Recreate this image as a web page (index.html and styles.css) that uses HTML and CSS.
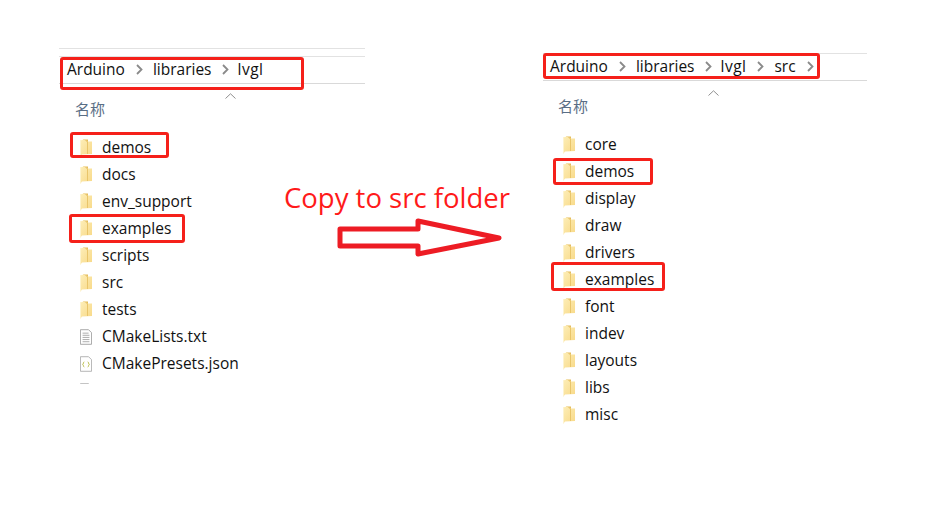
FILE: index.html
```html
<!DOCTYPE html>
<html lang="zh">
<head>
  <meta charset="UTF-8">
  <title>Copy to src folder</title>
  <link rel="stylesheet" href="styles.css">
</head>
<body>

  <svg class="defs" width="0" height="0">
    <defs>
      <linearGradient id="folderFront" x1="0" y1="0" x2="1" y2="1">
        <stop offset="0" stop-color="#fdeeb8"/>
        <stop offset="1" stop-color="#f8d987"/>
      </linearGradient>
      <symbol id="folder" viewBox="0 0 12 18">
        <path d="M3 0.5H8V15H3z" fill="#e4bc5c"/>
        <path d="M0 1.5L4 0.5L8 2.5H12V15L2 15.5L0.5 17.5L0 17z" fill="url(#folderFront)"/>
        <path d="M0 1.5V17L1 17.5V2z" fill="#fdf3cf"/>
        <path d="M4 0.5L8 2.5V15H7V3z" fill="#e9c56a"/>
      </symbol>
      <symbol id="chev" viewBox="0 0 7 11">
        <path d="M1 1L5.5 5.5L1 10" fill="none" stroke="#8a8a8a" stroke-width="1.8"/>
      </symbol>
    </defs>
  </svg>

  <main class="page">

    <!-- Carpeta lvgl -->
    <section class="panel panel-left">
      <div class="crumbs">
        <span>Arduino</span><svg class="chev"><use href="#chev"/></svg>
        <span>libraries</span><svg class="chev chev-short"><use href="#chev"/></svg>
        <span class="wide">lvgl</span>
      </div>
      <div class="sort"><svg width="11" height="6" viewBox="0 0 11 6"><path d="M0.5 5.5L5.5 0.8L10.5 5.5" fill="none" stroke="#8f8f8f"/></svg></div>
      <div class="col-name">名称</div>
      <div class="list">
        <div class="row"><svg class="ico"><use href="#folder"/></svg><span>demos</span><i class="mark mark-a"></i></div>
        <div class="row"><svg class="ico"><use href="#folder"/></svg><span>docs</span></div>
        <div class="row"><svg class="ico"><use href="#folder"/></svg><span>env_support</span></div>
        <div class="row"><svg class="ico"><use href="#folder"/></svg><span>examples</span><i class="mark mark-b"></i></div>
        <div class="row"><svg class="ico"><use href="#folder"/></svg><span>scripts</span></div>
        <div class="row"><svg class="ico"><use href="#folder"/></svg><span>src</span></div>
        <div class="row"><svg class="ico"><use href="#folder"/></svg><span>tests</span></div>
        <div class="row">
          <svg class="ico" viewBox="0 0 14 18">
            <path d="M0.5 0.5H10L13.5 4V17.5H0.5z" fill="#fff" stroke="#9a9a9a"/>
            <path d="M3 4.5H10M3 7H11M3 9.5H11M3 12H11M3 14.5H11" stroke="#a0a0a0"/>
          </svg>
          <span>CMakeLists.txt</span>
        </div>
        <div class="row">
          <svg class="ico" viewBox="0 0 14 18">
            <path d="M0.5 0.5H10L13.5 4V17.5H0.5z" fill="#fff" stroke="#a8a8a8"/>
            <path d="M5 6.5C3.5 6.5 4.5 9.5 3 9.5C4.5 9.5 3.5 12.5 5 12.5M9 6.5C10.5 6.5 9.5 9.5 11 9.5C9.5 9.5 10.5 12.5 9 12.5" fill="none" stroke="#b5b83c"/>
          </svg>
          <span>CMakePresets.json</span>
        </div>
        <div class="row">
          <svg class="ico" viewBox="0 0 14 18"><path d="M0.5 0.5H10L13.5 4V17.5H0.5z" fill="#fff" stroke="#a8a8a8"/></svg>
        </div>
      </div>
    </section>

    <!-- Carpeta src -->
    <section class="panel panel-right">
      <div class="crumbs">
        <span>Arduino</span><svg class="chev"><use href="#chev"/></svg>
        <span>libraries</span><svg class="chev chev-short"><use href="#chev"/></svg>
        <span class="wide">lvgl</span><svg class="chev"><use href="#chev"/></svg>
        <span>src</span><svg class="chev"><use href="#chev"/></svg>
      </div>
      <div class="sort"><svg width="11" height="6" viewBox="0 0 11 6"><path d="M0.5 5.5L5.5 0.8L10.5 5.5" fill="none" stroke="#8f8f8f"/></svg></div>
      <div class="col-name">名称</div>
      <div class="list">
        <div class="row"><svg class="ico"><use href="#folder"/></svg><span>core</span></div>
        <div class="row"><svg class="ico"><use href="#folder"/></svg><span>demos</span><i class="mark mark-c"></i></div>
        <div class="row"><svg class="ico"><use href="#folder"/></svg><span>display</span></div>
        <div class="row"><svg class="ico"><use href="#folder"/></svg><span>draw</span></div>
        <div class="row"><svg class="ico"><use href="#folder"/></svg><span>drivers</span></div>
        <div class="row"><svg class="ico"><use href="#folder"/></svg><span>examples</span><i class="mark mark-d"></i></div>
        <div class="row"><svg class="ico"><use href="#folder"/></svg><span>font</span></div>
        <div class="row"><svg class="ico"><use href="#folder"/></svg><span>indev</span></div>
        <div class="row"><svg class="ico"><use href="#folder"/></svg><span>layouts</span></div>
        <div class="row"><svg class="ico"><use href="#folder"/></svg><span>libs</span></div>
        <div class="row"><svg class="ico"><use href="#folder"/></svg><span>misc</span></div>
      </div>
    </section>

    <!-- Anotación -->
    <div class="note">
      <div class="note-text">Copy to src folder</div>
      <svg class="note-arrow" width="166" height="40" viewBox="0 0 166 40">
        <path d="M3 11H81V3L162 20L81 36V28H3z" fill="#fff" stroke="#ed1c24" stroke-width="5" stroke-linejoin="round"/>
      </svg>
    </div>

  </main>

</body>
</html>
```

FILE: styles.css
```css
* { margin: 0; padding: 0; box-sizing: border-box; }
html, body { width: 946px; height: 510px; overflow: hidden; }
body { background: #fff; color: #111; font-family: "Open Sans", "Noto Sans CJK SC", sans-serif; font-size: 15.5px; }

.defs { display: block; height: 0; }

.page {
  position: relative;
  display: flex;
  height: 510px;
  padding-left: 59px;
}

.panel { position: relative; }
.panel-left { width: 306px; margin-top: 48px; margin-right: 178px; border-top: 1px solid #e2e2e2; padding-top: 7px; }
.panel-right { width: 324px; margin-top: 53px; }

.crumbs {
  display: flex;
  align-items: center;
  height: 28px;
  padding-left: 8px;
  padding-bottom: 2px;
  border-top: 1px solid #e2e2e2;
  border-bottom: 1px solid #d9d9d9;
  position: relative;
}
.panel-right .crumbs { padding-left: 7px; }
.panel-left .crumbs::after,
.panel-right .crumbs::after {
  content: "";
  position: absolute;
  box-sizing: border-box;
  border: 3px solid #f5201a;
  border-radius: 3px;
}
.panel-left .crumbs::after { left: 1px; top: 0; width: 244px; height: 33px; }
.panel-right .crumbs::after { left: 0; top: -1px; width: 277px; height: 26px; }

.chev { width: 7px; height: 11px; margin: 0 10px 0 11px; flex: none; }
.chev-short { margin-right: 8px; }
.wide { letter-spacing: 0.5px; }

.sort { height: 15px; padding-left: 166px; padding-top: 9px; line-height: 0; }
.panel-right .sort { padding-left: 165px; }

.col-name { height: 35px; padding-left: 16px; font-size: 15px; line-height: 20px; color: #5a6e85; }
.panel-left .col-name { height: 30px; }
.panel-right .col-name { padding-left: 15px; }

.list { padding-left: 21px; }
.panel-left .list { height: 255px; padding-top: 5px; overflow: hidden; }
.panel-right .list { padding-left: 20px; }

.row {
  position: relative;
  display: flex;
  align-items: center;
  gap: 10px;
  width: fit-content;
  height: 27px;
  line-height: 27px;
}
.ico { width: 12px; height: 18px; flex: none; }

.mark {
  position: absolute;
  border: 3px solid #f5201a;
  border-radius: 3px;
}
.mark-a { left: -10px; right: -18px; top: -2px; bottom: 3px; }
.mark-b { left: -11px; right: -14px; top: -1px; bottom: -1px; }
.mark-c { left: -10px; right: -19px; top: 0; bottom: 0; }
.mark-d { left: -12px; right: -11px; top: -4px; bottom: 2px; }

/* encima de los paneles */
.note { position: absolute; left: 284px; top: 180px; }
.note-text { color: #ff1a1a; font-size: 27.5px; line-height: 36px; white-space: nowrap; }
.note-arrow { display: block; margin-left: 53px; margin-top: 2px; }
```
